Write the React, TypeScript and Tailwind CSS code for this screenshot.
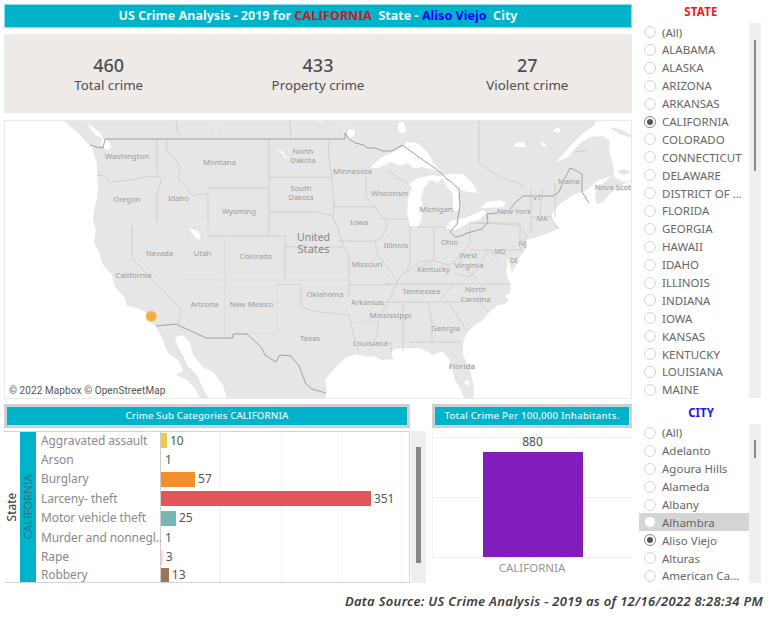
import React from "react";

const states = [
  "(All)", "ALABAMA", "ALASKA", "ARIZONA", "ARKANSAS", "CALIFORNIA", "COLORADO",
  "CONNECTICUT", "DELAWARE", "DISTRICT OF ...", "FLORIDA", "GEORGIA", "HAWAII",
  "IDAHO", "ILLINOIS", "INDIANA", "IOWA", "KANSAS", "KENTUCKY", "LOUISIANA", "MAINE",
];
const cities = [
  "(All)", "Adelanto", "Agoura Hills", "Alameda", "Albany", "Alhambra",
  "Aliso Viejo", "Alturas", "American Ca...",
];
const crimes = [
  { name: "Aggravated assault", value: 10, color: "#edc948" },
  { name: "Arson", value: 1, color: "#ffffff" },
  { name: "Burglary", value: 57, color: "#f28e2b" },
  { name: "Larceny- theft", value: 351, color: "#e15759" },
  { name: "Motor vehicle theft", value: 25, color: "#76b7b2" },
  { name: "Murder and nonnegl..", value: 1, color: "#ffffff" },
  { name: "Rape", value: 3, color: "#ffd5d9" },
  { name: "Robbery", value: 13, color: "#9c755f" },
];
const kpis = [
  { value: "460", label: "Total crime" },
  { value: "433", label: "Property crime" },
  { value: "27", label: "Violent crime" },
];

// [text, center x, baseline y, width]
const labels: [string, number, number, number][] = [
  ["Washington", 127, 158.5, 44], ["Montana", 219.5, 164.5, 33], ["North", 303, 153.5, 21],
  ["Dakota", 303, 163, 25], ["South", 301, 190.5, 21], ["Dakota", 301, 200, 25],
  ["Minnesota", 352.5, 174, 39], ["Wisconsin", 389.5, 195.5, 37], ["Oregon", 127, 201.5, 27],
  ["Idaho", 178.5, 200.5, 21], ["Wyoming", 239, 213.5, 34], ["Iowa", 359, 225, 18],
  ["Michigan", 436, 212, 33], ["Nevada", 159.5, 256, 27], ["Utah", 202.5, 256, 18],
  ["Colorado", 256, 258.5, 33], ["Illinois", 396, 247.5, 25], ["Ohio", 449.5, 244.5, 17],
  ["West", 468.5, 258, 18], ["Virginia", 469, 268, 29], ["Missouri", 367, 267, 31],
  ["Kentucky", 433.5, 272, 33], ["California", 133.5, 278, 36], ["Arizona", 204.5, 307, 28],
  ["New Mexico", 251.5, 307, 44], ["Oklahoma", 325, 296.5, 37], ["Arkansas", 367.5, 304.5, 33],
  ["Tennessee", 421.5, 294, 38], ["North", 475.5, 291.5, 21], ["Carolina", 475.5, 301.5, 30],
  ["Mississippi", 390.5, 318, 42], ["Georgia", 445.5, 331, 29], ["Texas", 310, 340.5, 20],
  ["Louisiana", 370.5, 346, 35], ["Florida", 462, 368.5, 26], ["New York", 514, 213.5, 34],
  ["Maine", 569, 184, 22], ["Nova Scot", 613, 189.5, 36], ["VT", 537, 200, 8],
  ["MA", 542, 221, 11], ["NJ", 522.5, 246, 8], ["MD", 500, 254, 11], ["DE", 514, 262.5, 8],
];

function UsMap() {
  return (
    <svg className="block h-full w-full" viewBox="5 121 626 277" preserveAspectRatio="none">
      <rect x="4" y="120" width="630" height="280" fill="#fff" />
      <path
        fill="#e6e6e6"
        d="M63 120L72 128 80 135 86 142 92 146 94 155 97 163 97 175 98 188 97 198 94 210 93 220 96 229 94 243 99 252 102 263 105 267 112 275 115 287 125 298 127 306 137 308 145 312 152 322 156 327 162 338 168 353 178 360 183 370 176 375 187 380 195 388 200 399H209L203 388 197 375 187 365 183 355 177 345 175 337 183 335 190 343 193 355 203 367 213 372 223 385 227 399H325L327 389 325 380 333 370 340 363 347 357 357 354 366 357 373 356 382 360 394 359 390 353 395 349 402 348 413 348 420 348 426 351 433 355 442 351 450 360 452 369 455 380 460 388 465 399H473L474 387 470 370 463 355 463 343 467 333 475 325 482 321 488 313 498 305 505 304 509 299 505 296 511 292 510 284 506 272 508 258 512 273 520 257 527 247 526 240 535 238 553 231 560 228 553 222 552 214 560 204 573 195 587 190 597 181 612 176 604 182 595 193 596 204 603 202 610 194 618 187 632 180 624 182 614 177 613 164 609 151 610 141 603 136 590 137 579 144 567 158 556 162 566 151 574 142 582 134 593 126 597 120Z"
      />
      <g fill="#fff">
        <path d="M87 123l7 5 6 4 3 7 7 3 1 6-5 2-5-6 1-6-7-3zM190 228l4 2 4 1 3 5-2 4-4-3-4-5z" />
        <path d="M370 168L377 161 384 156 396 151 403 147 406 142 417 143 420 145 428 153 435 165 441 171 434 170 423 167 413 168 408 163 400 166 391 162 378 168z" />
        <path d="M410 225L407 212 408 199 412 187 409 184 418 178 433 175 443 177 438 183 430 180 424 188 421 198 423 208 421 222 417 228 412 228z" />
        <path d="M441 176L449 174 462 174 471 181 478 193 468 192 461 190 458 195 460 207 456 212 453 207 453 194 448 188z" />
        <path d="M446 228L450 221 465 218 475 214 483 210 486 213 480 219 467 224 455 230z" />
        <path d="M481 208L486 202 500 200 506 203 503 207 490 208zM514 146l4-4 3 1 3-2 1 4 1 2-9 0zM541 142l4 1 1 4-4-1zM398 124l3-2 3 1 2 9-5 1-3-3zM348 130l4-1 3 2-1 5-5 3-2-4zM553 131l3-2 2-2 3 4-3 2zM317 122l4-2 2 2zM277 150l5 1 4 6 4 1-5 0-4-5z" />
      </g>
      <g fill="#e6e6e6">
        <path d="M609 127l11 2 12 6v3l-12-4zM617 171l7-2 8 3-9 3zM552 227l-15 7-7 3 11-1 13-6z" />
        <path fill="#fff" d="M466 380l4 1-2 5-4-3z" />
      </g>
      <g fill="none" stroke="#cacaca" strokeWidth=".8">
        <path d="M157 139v34l4 8-4 13v30M166 139l1 12 9 9 4 8-2 11 7 5 7 12 16-3v38M97 175l8 1 5 6 22-2 16-4 11 1M132 224v34l44 46M176 304l5 6-3 14M208 188h61M269 139v97M208 236h78M285 236v44M269 177h63M269 212h48l15 4 6 13 7 20 4 7v41M285 247h58M277 285v-0.500h24v22l14 5 20 2 14 2 5 21 4 14M328 139l1 20 3 20 2 28-1 11M333 207h42l6 9 7 8-5 12-7 5h-37M366 177v20l10 10M387 170l11 8 10 5M383 219h25M410 227v36l-4 8M375 241l3 15 10 11 9 15-8 18-10 18-2 17-4 8h18v12M349 285h41M384 302h77M403 302v49M410 342h51M428 302l4 20v21M384 284h127M438 302l15-17M447 300l20 31M463 300l15 0 11 13M410 227h36M434 227v34l15 4 10-8 11-13V221M470 223h50v28M470 250h52M488 250l-9 17-9 10-16-4M459 257l6 12 12 9M477 223l41 2 9 11-7 6M531 188v46M543 189l-3 17 1 16M555 183v34M531 217h19l9 12M479 121v42l14 10 14 7 15 4v5M176 121l1 10 5 7M290 121l1 17M575 152l13-2M396 284l5-9 9-5 10-8 14-2M418 269l14-8M507 255l-16-3 8 9" />
        <path stroke="#d9d9d9" d="M181 279h34M215 280h133M225 236v102M277 285v48h-32M352 322h25" />
        <path stroke="#f5f5f5" d="M96 224h112M216 121v17M344 121v17" />
      </g>
      <g fill="none" stroke="#a0a0a0" strokeWidth="1" strokeLinejoin="round">
        <path d="M90 145l6 2 7 1 2-9h240v-6l5 7 5 3 9 2 3 3 8 0 8 3 9 0 10-6 28 20 5 3 7 6 5 5 3 2 9 8 1 17-3 18-7 8 5 5 6-1 6-3 15-4 6-7-1-8 21-2 8-10 7-6h30l6-4 4-10 7-14 5 2 7 4v18l7 11" />
        <path d="M156 326l20-2 30 14h27v-4h14l14 13 4 8 11 7 4-7 11 1 8 10 7 18 6 5 14 4" />
      </g>
      <g fontFamily="'Noto Sans', sans-serif" fontSize="7.6" fill="#999" textAnchor="middle">
        {labels.map(([t, x, y, w], i) => (
          <text key={i} x={x} y={y} textLength={w} lengthAdjust="spacingAndGlyphs"
            stroke="#e8e8e8" strokeWidth="1.2" paintOrder="stroke">{t}</text>
        ))}
        <g fontSize="10.2" fill="#858585">
          <text x="313.5" y="240.5" textLength="33" lengthAdjust="spacingAndGlyphs">United</text>
          <text x="313.5" y="253" textLength="32" lengthAdjust="spacingAndGlyphs">States</text>
        </g>
      </g>
      <circle cx="151.2" cy="316.3" r="5" fill="#f6ab45" stroke="#f2be4c" strokeWidth="1.2" />
    </svg>
  );
}

function RadioRow({ text, checked, hover }: { text: string; checked: boolean; hover?: boolean }) {
  return (
    <li className={`flex h-[17.9px] items-center pl-[5px] ${hover ? "bg-[#d5d5d5]" : ""}`}>
      <span className={`flex size-[12px] shrink-0 items-center justify-center rounded-full border bg-white ${checked ? "border-[#888]" : "border-[#d4d4d4]"}`}>
        {checked && <span className="size-[6px] rounded-full bg-[#555]" />}
      </span>
      <span className="ml-[6px] whitespace-nowrap text-[11.5px] text-[#666]">{text}</span>
    </li>
  );
}

function Banner({ children }: { children: React.ReactNode }) {
  return (
    <h2 className="flex h-[24px] items-center justify-center border-[3px] border-[#d0d0d0] bg-[#00b3ca] text-[9.7px] font-medium whitespace-nowrap text-[#e8fafc]">
      {children}
    </h2>
  );
}

export default function App() {
  return (
    <div className="flex h-[617px] w-[771px] flex-col overflow-hidden bg-white pl-[4px] font-['Noto_Sans',sans-serif] text-[#4e4e4e]">
      <div className="flex h-[583px] pt-[4px]">
        <main className="flex w-[628px] flex-col">
          <h1 className="flex h-[24px] shrink-0 items-center justify-center border border-[#8bdce6] bg-[#00b3ca] pt-px text-[12.5px] font-bold tracking-[0.03px] whitespace-pre text-[#eafafa]">
            <span>US Crime Analysis - 2019 for </span>
            <span className="text-[#d3161d]">CALIFORNIA</span>
            <span>{"  State - "}</span>
            <span className="text-[#0000ff]">Aliso Viejo</span>
            <span>{"  City"}</span>
          </h1>
          <section className="mt-[6px] grid h-[79px] shrink-0 grid-cols-3 bg-[#eeeae7] pt-[20px] text-center">
            {kpis.map((k) => (
              <div key={k.label}>
                <div className="text-[18px] leading-[22px] font-medium">{k.value}</div>
                <div className="text-[13.3px] leading-[18px]">{k.label}</div>
              </div>
            ))}
          </section>
          <section className="relative mt-[7px] h-[279px] shrink-0 border border-[#e9e9e9]">
            <UsMap />
            <p className="absolute bottom-0 left-0 pl-[4px] font-['Roboto',sans-serif] text-[10px] leading-[15px] tracking-[0.1px] whitespace-nowrap text-[#555]">
              © 2022 Mapbox © OpenStreetMap
            </p>
          </section>
          <div className="mt-[5px] flex">
            <section className="w-[406px]">
              <Banner><span className="tracking-[0.1px]">Crime Sub Categories CALIFORNIA</span></Banner>
              <div className="mt-[3px] flex h-[152px] border-y border-r border-[#d4d4d4]">
                <div className="flex w-[16px] items-center justify-center">
                  <span className="-rotate-90 text-[12px] leading-[14px] text-[#333]">State</span>
                </div>
                <div className="flex w-[16px] items-center justify-center bg-[#00b3ca]">
                  <span className="-rotate-90 text-[11.5px] leading-[14px] tracking-[-0.2px] text-[#39747c]">CALIFORNIA</span>
                </div>
                <ul className="-mt-px w-[125px] border-r border-[#cfcfcf] pl-[5px]">
                  {crimes.map((c) => (
                    <li key={c.name} className="flex h-[19.4px] items-center text-[12px] leading-[14px] tracking-[-0.1px] whitespace-nowrap text-[#8a8a8a] last:h-[17px]">{c.name}</li>
                  ))}
                </ul>
                <div className="flex flex-1 overflow-hidden bg-[linear-gradient(to_right,transparent_59px,#f0f0f0_59px,#f0f0f0_60px,transparent_60px,transparent_120px,#f4f4f4_120px,#f4f4f4_121px,transparent_121px,transparent_180px,#f4f4f4_180px,#f4f4f4_181px,transparent_181px,transparent_240px,#f4f4f4_240px,#f4f4f4_241px,transparent_241px)]">
                  <ul className="-mt-px">
                    {crimes.map((c) => (
                      <li key={c.name} className="flex h-[19.4px] items-center last:h-[17px]">
                        <span className="h-[15px]" style={{ width: Math.max(c.value * 0.598, 1), backgroundColor: c.color }} />
                        <span className="ml-[3px] text-[12px] leading-[14px] text-[#555]">{c.value}</span>
                      </li>
                    ))}
                  </ul>
                </div>
              </div>
            </section>
            <div className="mt-[27px] ml-px h-[152px] w-[15px] bg-[#eeeeee] pt-[16px] pl-[5px]">
              <div className="h-[116px] w-[5px] bg-[#878787]" />
            </div>
            <section className="ml-[6px] w-[200px]">
              <Banner><span className="tracking-[0.2px]">Total Crime Per 100,000 Inhabitants.</span></Banner>
              <div className="mt-[3px] flex h-[127px] flex-col items-center border-b border-l border-[#f0f0f0] bg-[linear-gradient(to_bottom,transparent_6px,#f1f1f1_6px,#f1f1f1_7px,transparent_7px,transparent_66px,#f1f1f1_66px,#f1f1f1_67px,transparent_67px)]">
                <span className="h-[21px] pt-[2px] text-[12px] leading-[18px]">880</span>
                <div className="h-[105px] w-[100px] bg-[#821cba]" />
              </div>
              <p className="text-center text-[11.5px] leading-[20px] text-[#969696]">CALIFORNIA</p>
            </section>
          </div>
        </main>
        <aside className="ml-[7px] w-[122px]">
          <h2 className="h-[19px] pl-[2px] text-center text-[11.5px] leading-[16px] font-bold tracking-[0.2px] text-[#f31620]">STATE</h2>
          <div className="flex h-[375px]">
            <ul className="w-[110px] pt-[0.2px]">
              {states.map((s) => <RadioRow key={s} text={s} checked={s === "CALIFORNIA"} />)}
            </ul>
            <div className="w-[12px] bg-[#efefef] pt-[17px] pl-[5px]">
              <div className="h-[131px] w-[2px] bg-[#888]" />
            </div>
          </div>
          <h2 className="h-[26px] pt-[6px] pl-[2px] text-center text-[11.5px] leading-[17px] font-bold text-[#2118f0]">CITY</h2>
          <div className="flex h-[159px]">
            <ul className="w-[110px]">
              {cities.map((s) => <RadioRow key={s} text={s} checked={s === "Aliso Viejo"} hover={s === "Alhambra"} />)}
            </ul>
            <div className="w-[12px] bg-[#efefef] pt-[16px] pl-[5px]">
              <div className="h-[18px] w-[2px] bg-[#888]" />
            </div>
          </div>
        </aside>
      </div>
      <footer className="mt-[9px] pr-[8px] text-right text-[13px] leading-[18px] font-semibold tracking-[0.31px] whitespace-nowrap text-[#3c3c3c] italic">
        Data Source: US Crime Analysis - 2019 as of 12/16/2022 8:28:34 PM
      </footer>
    </div>
  );
}
